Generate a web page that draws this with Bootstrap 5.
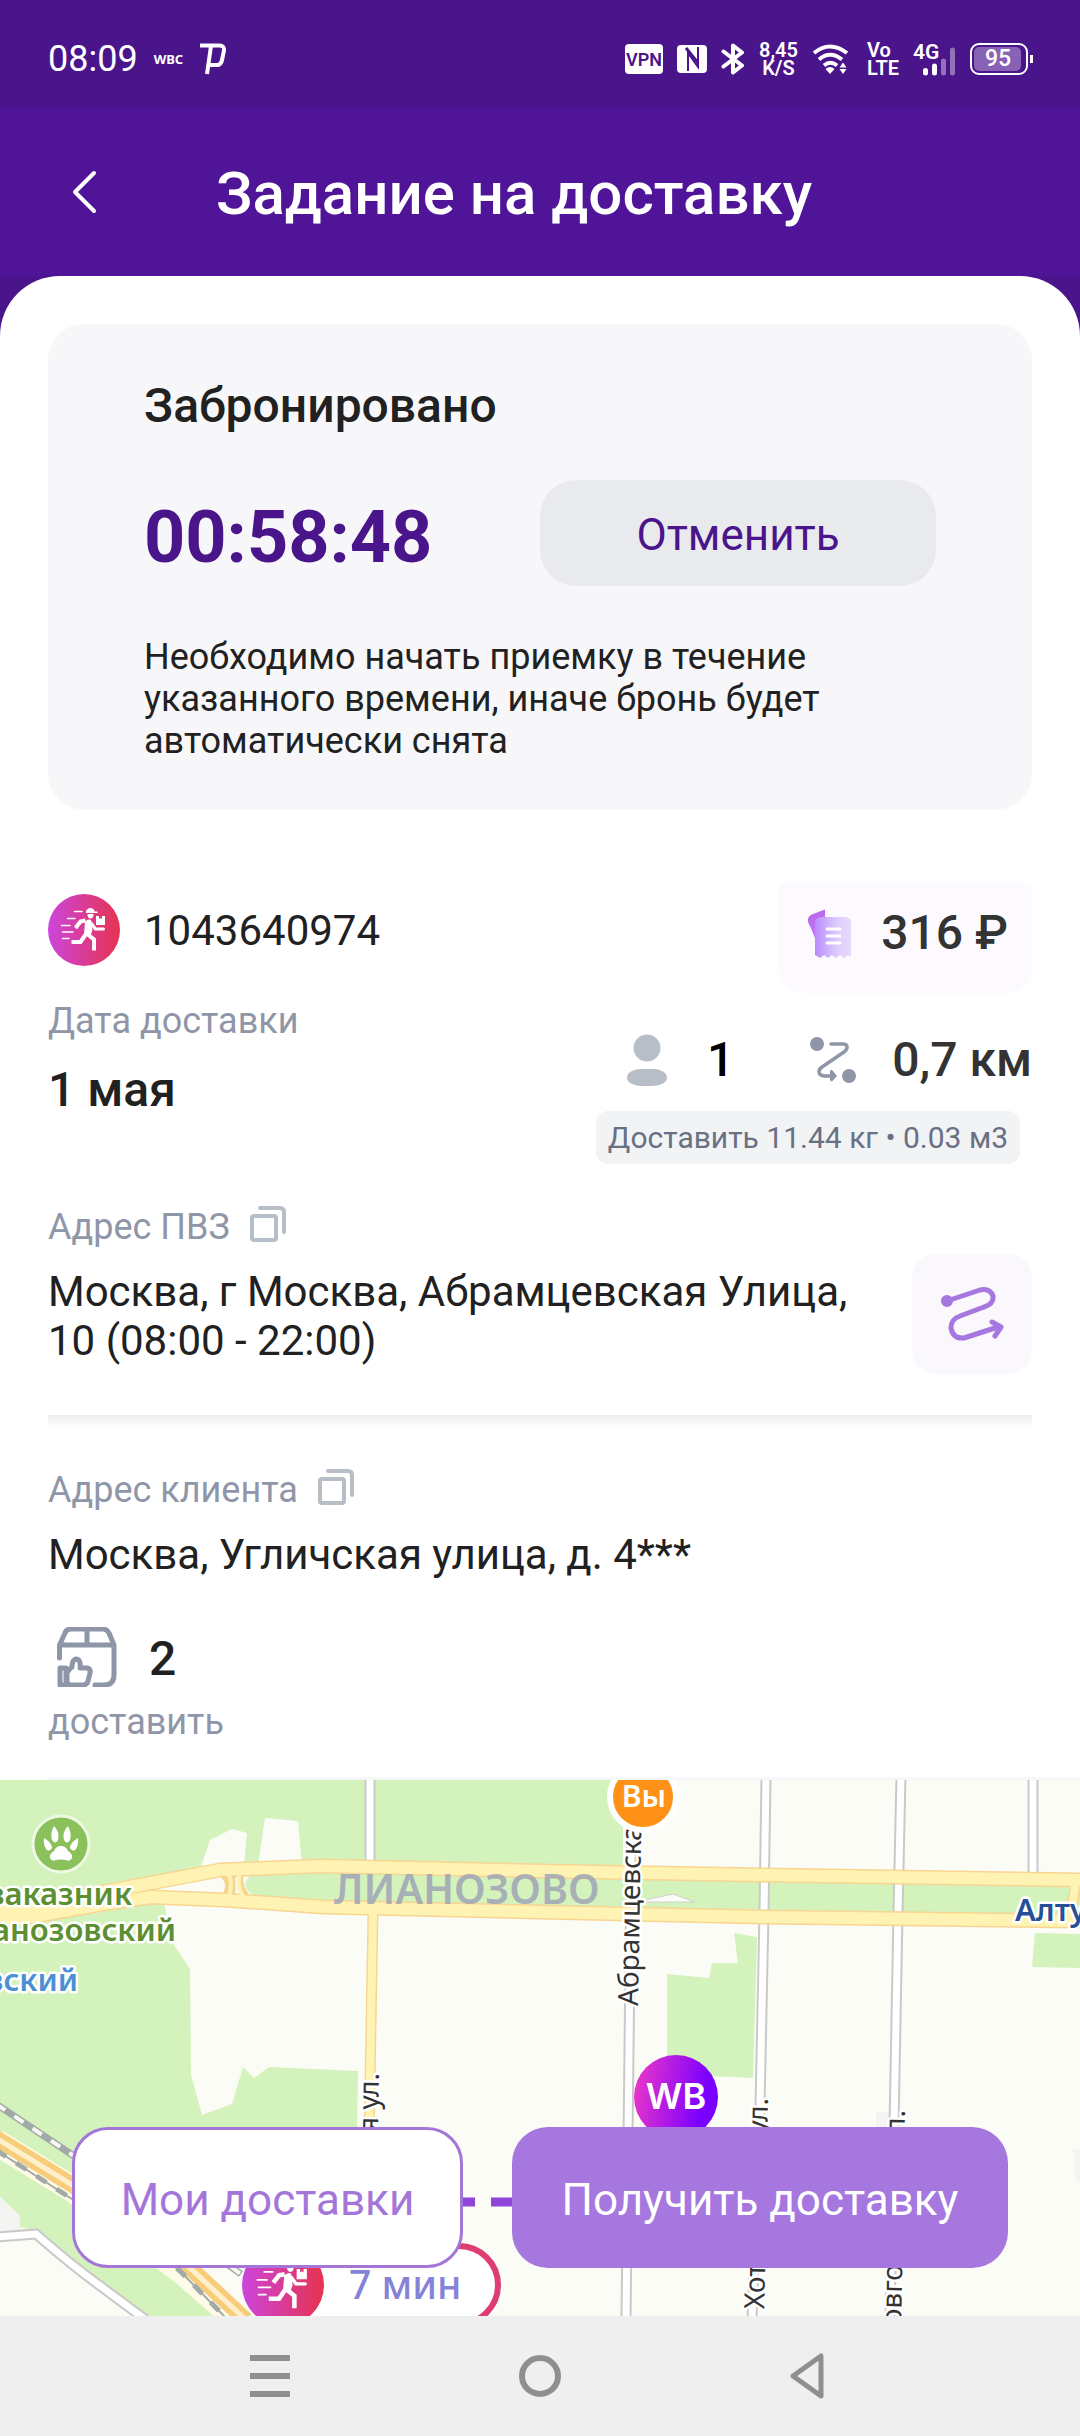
<!DOCTYPE html>
<html lang="ru">
<head>
<meta charset="utf-8">
<meta name="viewport" content="width=device-width, initial-scale=1">
<title>Задание на доставку</title>
<link href="https://cdn.jsdelivr.net/npm/bootstrap@5.3.0/dist/css/bootstrap.min.css" rel="stylesheet">
<script src="https://cdn.jsdelivr.net/npm/bootstrap@5.3.0/dist/js/bootstrap.bundle.min.js"></script>
<style>
  body { font-family: Roboto, "Noto Sans", sans-serif; color: #212121; background: #fff; }
  svg { display: block; flex-shrink: 0; }
  button { font-family: inherit; }
  .t36 { font-size: 36px; line-height: 42px; }
  .t42 { font-size: 42px; line-height: 49px; }
  .t44 { font-size: 44px; line-height: 50px; }
  .t48 { font-size: 48px; line-height: 56px; font-weight: 500; }
  .muted { color: #8f96a8; }
  .ink { color: #333; }
  .status { height: 108px; padding: 10px 46px 0 48px; background: #4a148a; color: #fff; gap: 16px; }
  .status-icons { gap: 14px; }
  .wbc { font: 700 13px/16px "Noto Sans", sans-serif; }
  .stack { font-size: 20px; line-height: 18px; font-weight: 600; }
  .appbar { height: 168px; padding: 0 60px; background: #4f1497; color: #fff; gap: 108px; }
  .appbar h1 { font-size: 60px; line-height: 72px; font-weight: 500; }
  .back { width: 48px; height: 60px; color: #fff; }
  .sheet-wrap { background: #4a148a; }
  .sheet { background: #fff; border-radius: 60px 60px 0 0; padding: 48px 48px 34px; }
  .booking { background: #f7f7f9; border-radius: 36px; padding: 54px 96px 48px; }
  .timer { font-size: 72px; line-height: 96px; font-weight: 700; color: #4a148a; }
  .timer-row { margin: 46px 0 50px; }
  .cancel { background: #e9eaee; border-radius: 36px; height: 106px; padding: 4px 0 0; color: #4a148a; }
  .cancel:hover { background: #e0e1e7; color: #4a148a; }
  .summary { margin-top: 73px; }
  .summary-left { padding-top: 11px; }
  .order-id { gap: 24px; }
  .date-label { margin: 34px 0 20px; }
  .price { background: #fcfaff; border-radius: 6px 6px 24px 24px; padding: 22px 24px 32px 28px; gap: 28px; }
  .metrics { margin: 39px 0 23px; gap: 76px; }
  .people { gap: 40px; }
  .distance { gap: 36px; }
  .weight { background: #f2f3f5; color: #697084; border-radius: 12px; padding: 6px 12px; font-size: 30px; line-height: 41px; margin-right: 12px; }
  .label-row { margin-top: 42px; gap: 20px; }
  .addr-row { margin-top: 6px; gap: 24px; }
  .addr-row .t42 { padding-top: 13px; }
  .route-btn { width: 120px; height: 120px; border-radius: 24px; background: #faf7fd; }
  .rule { height: 12px; margin-top: 41px; background: linear-gradient(#ededed, #f8f8f8 60%, #fff); }
  .client { margin-top: 19px; }
  .parcel { margin: 48px 0 14px; padding-left: 9px; gap: 32px; }
  .map-top { height: 3px; background: #f6f7f9; margin-left: 48px; }
  .map { padding: 347px 72px 48px; gap: 49px; overflow: hidden; background: #fbfcf6; }
  .map-art { inset: 0; width: 100%; height: 100%; }
  .cta { height: 141px; border-radius: 36px; padding: 4px 0 0; }
  .cta-mine { flex: 385 1 0; background: #fff; border: 3px solid #a476da; color: #a476da; }
  .cta-get { flex: 496 1 0; background: #a677de; color: #fff; }
  .sysnav { height: 120px; background: #efefef; padding: 0 12.5%; }
  .halo { paint-order: stroke; stroke: #fff; stroke-width: 5px; stroke-linejoin: round; }
  .map-text { font-family: "Noto Sans", sans-serif; font-size: 28px; fill: #333; }
  .poi { font-family: "Noto Sans", sans-serif; font-size: 31px; font-weight: 600; }
</style>
</head>
<body>
<svg width="0" height="0" class="position-absolute" aria-hidden="true">
  <defs>
    <linearGradient id="pink"><stop offset="0" stop-color="#cc45dc"/><stop offset="1" stop-color="#e6334f"/></linearGradient>
    <linearGradient id="wb" y2=".2"><stop offset="0" stop-color="#f23ac4"/><stop offset=".9" stop-color="#7a00ff"/></linearGradient>
    <linearGradient id="sheetBack" x1="0" y1="0" x2=".4" y2="1"><stop offset="0" stop-color="#c160e6"/><stop offset="1" stop-color="#b187ff"/></linearGradient>
    <linearGradient id="sheetFront"><stop offset="0" stop-color="#b98bfb"/><stop offset=".65" stop-color="#e0cffd"/><stop offset="1" stop-color="#e6d8fe"/></linearGradient>
    <symbol id="runner" viewBox="0 0 72 72">
      <circle cx="36" cy="36" r="36" fill="url(#pink)"/>
      <g fill="none" stroke="#fff" stroke-linecap="round" stroke-linejoin="round">
        <path stroke-width="1.500" d="M26.500 17.500h7.500M19.500 24.500h7.500M13.500 31.500h8.500M14.500 38h10.500M14.500 44.500h6.500"/>
        <path stroke-width="4" stroke-linecap="butt" d="M27.500 34l5-6.500 5-1"/>
        <path stroke-width="3" d="M43 29l4.500 6h8"/>
        <path stroke-width="4" stroke-linecap="butt" stroke-linejoin="miter" d="M23.500 48h9l5.500-8M38 39l8 6.500v11"/>
      </g>
      <path fill="#fff" d="M38 17.500q1-3.500 4.500-3.500t4 3.500h3V19H38zM39.500 20h6q0 4.500-3 4.500t-3-4.500zM37 28q3-3.500 6-2l1.500 10-2.500 7-6-2z"/>
      <path fill="#fff" d="M48 22h3v3l1.500-1 1.500 1v-3h3v9h-9z"/>
    </symbol>
    <symbol id="copy" viewBox="0 0 36 36">
      <g fill="none" stroke="#b7bec8" stroke-width="4" stroke-linecap="round" stroke-linejoin="round">
        <rect x="2" y="10" width="24" height="24" rx="2"/><path d="M10 2h20q4 0 4 4v20"/>
      </g>
    </symbol>
  </defs>
</svg>

<header>
  <div class="status d-flex align-items-center">
    <span class="t36">08:09</span>
    <span class="wbc">WBC</span>
    <svg width="28" height="32" viewBox="0 0 28 32" fill="none" stroke="#fff" stroke-width="4"><path d="M1 2.500h19.500q5 0 4.500 5L23 17q-1 5-5 5h-8M12 3L8 31"/></svg>
    <div class="status-icons d-flex align-items-center ms-auto">
      <svg width="38" height="30" viewBox="0 0 38 30"><rect width="38" height="30" rx="4" fill="#fff"/><text x="19" y="22" text-anchor="middle" font-size="18" font-weight="600" fill="#4a148a">VPN</text></svg>
      <svg width="30" height="28" viewBox="0 0 30 28"><rect width="30" height="28" rx="4" fill="#fff"/><path fill="none" stroke="#4a148a" stroke-width="2" d="M11 26V8l10 14V2"/><path stroke="#4a148a" stroke-width="3" d="M9 3l12 15"/></svg>
      <svg width="24" height="32" viewBox="0 0 24 32" fill="none" stroke="#fff" stroke-width="4" stroke-linecap="round" stroke-linejoin="round"><path d="M2.500 8.500L21 22.500l-9 7V2.500l9 7L2.500 23.500"/></svg>
      <div class="stack text-center">8,45<br>K/S</div>
      <svg width="37" height="30" viewBox="0 0 37 30" fill="none" stroke="#fff" stroke-width="4"><path d="M2 9q16-13 33 0M7 15.500q11-9.500 23 0M12 21.500q6.500-5.500 13 0"/><path fill="#fff" stroke="none" d="M13.500 25q4.500-4 9 0L18 30zM27.500 23.500l3.500-5 3.500 5zM27.500 25l3.500 5 3.500-5z"/></svg>
      <div class="stack ms-1">Vo<br>LTE</div>
      <svg width="43" height="33" viewBox="0 0 43 33"><g stroke="#fff" stroke-width="5" stroke-linecap="round"><path d="M12.500 27.500v2.500M21.500 23v7"/><path opacity=".4" d="M30.500 18v12M39.500 7v23"/></g><text x="0" y="16" font-size="21" font-weight="600" fill="#fff">4G</text></svg>
      <svg width="64" height="32" viewBox="0 0 64 32"><rect x="1" y="1" width="56" height="30" rx="8" fill="none" stroke="#fff" stroke-width="2"/><rect x="4" y="4" width="47" height="24" rx="5" fill="#8862b5"/><path d="M61.500 12v8" stroke="#fff" stroke-width="3"/><text x="28" y="23" text-anchor="middle" font-size="23" font-weight="500" fill="#fff">95</text></svg>
    </div>
  </div>
  <div class="appbar d-flex align-items-center">
    <button type="button" class="back btn border-0 p-0 d-flex align-items-center justify-content-center" aria-label="Назад">
      <svg width="26" height="44" viewBox="0 0 26 44" fill="none" stroke="#fff" stroke-width="4" stroke-linecap="round" stroke-linejoin="round"><path d="M23 3L4 22l19 19"/></svg>
    </button>
    <h1 class="m-0 pt-1">Задание на доставку</h1>
  </div>
</header>

<main>
  <div class="sheet-wrap">
    <div class="sheet">
      <section class="booking">
        <h2 class="t48 m-0">Забронировано</h2>
        <div class="timer-row row g-0 align-items-end">
          <div class="timer col-6">00:58:48</div>
          <div class="col-6"><button type="button" class="cancel btn border-0 w-100 t44">Отменить</button></div>
        </div>
        <p class="t36 m-0">Необходимо начать приемку в течение указанного времени, иначе бронь будет автоматически снята</p>
      </section>

      <section class="summary d-flex justify-content-between">
        <div class="summary-left">
          <div class="order-id d-flex align-items-center">
            <svg width="72" height="72"><use href="#runner"/></svg>
            <span class="t42">1043640974</span>
          </div>
          <div class="date-label t36 muted">Дата доставки</div>
          <div class="t48">1 мая</div>
        </div>
        <div class="d-flex flex-column align-items-end">
          <div class="price d-flex align-items-center">
            <svg width="46" height="50" viewBox="0 0 46 50"><path fill="url(#sheetBack)" d="M6 6L19 1q6-2 8 3l8 30-24 6Q8 28 1 14 0 8 6 6z" clip-path="inset(0 17px 10px 0)"/><path fill="url(#sheetFront)" d="M8 15q0-6 6-6h24q6 0 6 6v34l-3-2-4 3-4-3-4 3-4-3-4 3-4-3-4 3-5-3z"/><path stroke="#fff" stroke-width="3" stroke-linecap="round" d="M20 21h13M20 28h13M20 35h13"/></svg>
            <span class="t48 ink">316 ₽</span>
          </div>
          <div class="metrics d-flex align-items-center">
            <div class="people d-flex align-items-center">
              <svg width="40" height="52" viewBox="0 0 40 52" fill="#b7bec8"><circle cx="20" cy="14" r="13.500"/><rect y="35" width="40" height="17" rx="14" ry="8.500"/></svg>
              <span class="t48 text-black">1</span>
            </div>
            <div class="distance d-flex align-items-center">
              <svg width="46" height="46" viewBox="0 0 46 46" fill="#8f96a8"><circle cx="7" cy="7" r="7"/><circle cx="39" cy="39" r="7"/><path d="M21 7h12q4 0 4 3t-3 5L12 30q-3 2-3 5t5 4h10" fill="none" stroke="#8f96a8" stroke-width="3.500" stroke-linecap="round"/><path d="M20 33.500q1.500-1 3 .5l4 5-5 5.500q-2 0-2-2z"/></svg>
              <span class="t48 ink">0,7 км</span>
            </div>
          </div>
          <div class="weight">Доставить 11.44 кг • 0.03 м3</div>
        </div>
      </section>

      <section>
        <div class="label-row d-flex align-items-start">
          <span class="t36 muted">Адрес ПВЗ</span>
          <button type="button" class="btn border-0 p-0" aria-label="Скопировать адрес ПВЗ"><svg width="36" height="36"><use href="#copy"/></svg></button>
        </div>
        <div class="addr-row d-flex justify-content-between align-items-start">
          <div class="t42">Москва, г Москва, Абрамцевская Улица, 10 (08:00 - 22:00)</div>
          <button type="button" class="route-btn btn border-0 p-0 d-flex align-items-center justify-content-center flex-shrink-0" aria-label="Построить маршрут">
            <svg width="64" height="56" viewBox="0 0 64 56" fill="none" stroke="#a677de" stroke-width="5" stroke-linecap="round" stroke-linejoin="round"><circle cx="7" cy="15" r="3.500" fill="#a677de"/><path d="M7 15l33-11q10-2 13 6 1 8-9 11L20 30q-9 3-9 12 2 11 13 10l34-11M52 36l9 5-6 9"/></svg>
          </button>
        </div>
      </section>

      <div class="rule"></div>

      <section>
        <div class="label-row d-flex align-items-start">
          <span class="t36 muted">Адрес клиента</span>
          <button type="button" class="btn border-0 p-0" aria-label="Скопировать адрес клиента"><svg width="36" height="36"><use href="#copy"/></svg></button>
        </div>
        <div class="client t42">Москва, Угличская улица, д. 4***</div>
        <div class="parcel d-flex align-items-end">
          <svg width="60" height="60" viewBox="0 0 60 60" fill="none" stroke="#8f96a8" stroke-width="5" stroke-linecap="round" stroke-linejoin="round"><path d="M2.500 31V18L8 6q1.500-4 6-4h32q4 0 6 4l5 12v30q0 10-10 10h-9M2.500 18h54.500M30 2v16M3 41h6v17H3zM10 46q1-3 5-6 0-7 4-8 5 0 4 9h7q4 1 3 5l-2 8q-1 4-5 4H14q-4 0-4-4z"/></svg>
          <span class="t48">2</span>
        </div>
        <div class="t36 muted">доставить</div>
      </section>
    </div>
  </div>

  <div class="bg-white"><div class="map-top"></div></div>

  <section class="map d-flex position-relative">
    <svg class="map-art position-absolute" viewBox="0 0 1080 536" preserveAspectRatio="xMidYMin slice" role="img" aria-label="Карта маршрута">
      <g fill="#d4f2bc">
        <path d="M0 0H623V90L540 86 320 80 220 86 130 108 164 124 174 165 190 189 191 295 202 335 232 324 243 287 254 298 269 287 358 291 357 357 182 487 215 536H145L36 451 20 447V436L0 417z"/>
        <path d="M250 95L320 93 1080 106V135L540 126 320 121 262 118q-16-4-17-15z"/>
        <path d="M667 194l42 4 3-15h26l-4-30 23 4-4 141-86-4zM1035 153l45 1v34l-48-1z"/>
      </g>
      <path fill="#fbfcf6" d="M199 92l11-32 22-11 15 4-3 32zM258 85l7-47 33 3 4 44zM110 114l110-22-8 22-60 2z"/>
      <path fill="#f4f5f2" d="M0 417l20 19v15H0zM876 332h14v15h-14zM1073 369h7v33l-4-1z"/>
      <path d="M645 120l28-6 22 8h-50z" fill="#fbfcf6" stroke="#cfd1cd"/>

      <path fill="none" stroke="#c9c9c9" stroke-width="11" d="M370-4V86M632 0L626 540M766-4L764 133 760 326 752 540M901-4L898 133 894 347 890 540M1033-4V98M-4 457L36 454Q70 484 103 508L146 540"/>
      <path fill="none" stroke="#fff" stroke-width="7" d="M370-4V86M632 0L626 540M766-4L764 133 760 326 752 540M901-4L898 133 894 347 890 540M1033-4V98M-4 457L36 454Q70 484 103 508L146 540"/>

      <g fill="none" stroke-linejoin="round">
        <g stroke="#f8d591" stroke-width="15">
          <path d="M-4 132L103 112 220 90 320 86 540 91 764 95 1084 100"/>
          <path d="M-4 143L103 124 151 117 224 120 324 127 540 132 764 137 1084 141"/>
          <path stroke-width="11" d="M373 133L369 357M1076 104L1070 140"/>
          <path stroke-width="5" d="M222 95q10 8 2 22M241 95q-2 15 10 24M233 95v22"/>
        </g>
        <g stroke="#fff3b3" stroke-width="12">
          <path d="M-4 132L103 112 220 90 320 86 540 91 764 95 1084 100"/>
          <path d="M-4 143L103 124 151 117 224 120 324 127 540 132 764 137 1084 141"/>
          <path stroke-width="8" d="M373 130L369 357M1076 101L1070 140"/>
          <path stroke-width="4" d="M229 95q4 9 0 22M239 95q-2 15 6 24"/>
        </g>
      </g>

      <g fill="none">
        <path stroke="#a2aaa7" stroke-width="7" d="M-4 324L74 376 241 494"/>
        <path stroke="#f7f8f6" stroke-width="4" stroke-dasharray="11 11" d="M-4 324L74 376 241 494"/>
        <path stroke="#fffbe9" stroke-width="26" d="M-4 362L74 410 183 492 238 540"/>
        <path stroke="#f7cd7c" stroke-width="16" d="M-4 358L74 406 190 488 246 540"/>
        <path stroke="#fff0cc" stroke-width="5" d="M-4 358L74 406 190 488 246 540"/>
        <path stroke="#a2aaa7" stroke-width="2" d="M-4 370L72 419 179 490 226 538"/>
        <path stroke="#a2aaa7" stroke-width="5" stroke-dasharray="12 12" d="M-4 370L72 419 179 490 226 538"/>
        <path stroke="#8f45d8" stroke-width="9" stroke-dasharray="21 16" d="M454 422H520"/>
      </g>

      <g transform="translate(61 64)">
        <circle r="28" fill="#8bc15a" stroke="#effae6" stroke-width="3"/>
        <path fill="#fff" d="M-7-18q6 6 4 14-3 5-6 0-2-7 2-14zM7-18q-6 6-4 14 3 5 6 0 2-7-2-14zM-17-6q8 5 8 10-3 5-6 1-3-5-2-11zM17-6q-8 5-8 10 3 5 6 1 3-5 2-11zM0 2q5 0 7 5 5 3 4 7-2 4-6 2-5-1-10 0-4 2-6-2-1-4 4-7 2-5 7-5z"/>
      </g>
      <g class="poi halo" text-anchor="end">
        <text x="132" y="125" fill="#5b8f31">заказник</text>
        <text x="176" y="161" fill="#5b8f31">Лианозовский</text>
        <text x="78" y="211" fill="#4b8fd6">Лианозовский</text>
      </g>
      <text class="poi halo" x="1015" y="141" fill="#254f96">Алтуфьево</text>
      <text x="334" y="124" font-family="Noto Sans, sans-serif" font-size="41" font-weight="600" fill="#9fa5b5" opacity=".85">ЛИАНОЗОВО</text>
      <g class="map-text halo">
        <text transform="translate(638 226) rotate(-89)">Абрамцевская</text>
        <text transform="translate(768 318) rotate(-89)" text-anchor="end">Хотьковская ул.</text>
        <text transform="translate(905 330) rotate(-89)" text-anchor="end">Новгородская ул.</text>
        <text transform="translate(379 293) rotate(-89)" text-anchor="end">я ул.</text>
      </g>
      <circle cx="643" cy="17" r="33" fill="#ff9118" stroke="#fff" stroke-width="6"/>
      <text x="644" y="27" text-anchor="middle" font-family="Noto Sans, sans-serif" font-size="30" font-weight="600" fill="#fff">Вы</text>
      <circle cx="676" cy="317" r="42" fill="url(#wb)"/>
      <text x="676" y="329" text-anchor="middle" font-family="Inter, sans-serif" font-size="36" font-weight="600" fill="#fff">WB</text>
      <rect x="246" y="466" width="252" height="78" rx="39" fill="#fff" stroke="#de3d74" stroke-width="6"/>
      <svg x="242" y="464" width="82" height="82"><use href="#runner"/></svg>
      <text x="349" y="519" font-family="Noto Sans, sans-serif" font-size="39" font-weight="500" fill="#8583d8">7 мин</text>
    </svg>
    <button type="button" class="cta cta-mine btn position-relative t44">Мои доставки</button>
    <button type="button" class="cta cta-get btn border-0 position-relative t44">Получить доставку</button>
  </section>
</main>

<nav class="sysnav row g-0 align-items-center" aria-label="Системная навигация">
  <div class="col-4"><button type="button" class="btn border-0 p-0 d-block mx-auto" aria-label="Недавние"><svg width="42" height="48" viewBox="0 0 42 48" fill="#8f8f8f"><path d="M1 3h40v6H1zM1 21h40v6H1zM1 39h40v6H1z"/></svg></button></div>
  <div class="col-4"><button type="button" class="btn border-0 p-0 d-block mx-auto" aria-label="Домой"><svg width="42" height="42" viewBox="0 0 42 42" fill="none" stroke="#8f8f8f" stroke-width="6"><circle cx="21" cy="21" r="18"/></svg></button></div>
  <div class="col-4"><button type="button" class="btn border-0 p-0 d-block mx-auto" aria-label="Назад"><svg width="42" height="48" viewBox="0 0 42 48" fill="none" stroke="#8f8f8f" stroke-width="5" stroke-linejoin="round"><path d="M32 4v40L4 24z"/></svg></button></div>
</nav>
</body>
</html>
